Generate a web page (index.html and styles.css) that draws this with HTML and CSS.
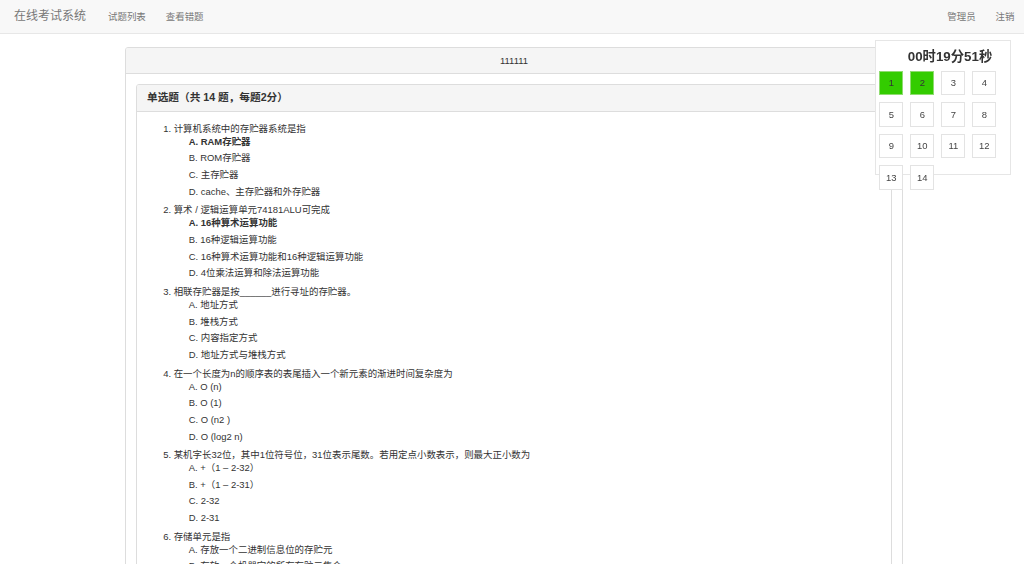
FILE: index.html
```html
<!DOCTYPE html>
<html lang="zh-CN">
<head>
<meta charset="utf-8">
<title>在线考试系统</title>
<link rel="stylesheet" href="styles.css">
</head>
<body>
<nav class="navbar">
  <a class="brand">在线考试系统</a>
  <ul class="nav">
    <li><a>试题列表</a></li>
    <li><a>查看错题</a></li>
  </ul>
  <ul class="nav nav-right">
    <li><a>管理员</a></li>
    <li><a>注销</a></li>
  </ul>
</nav>

<main class="main">
  <section class="panel">
    <div class="panel-heading center">111111</div>
    <div class="panel-body">
      <section class="panel">
        <div class="panel-heading section-title">单选题（共 14 题，每题2分）</div>
        <div class="panel-body">
          <ol class="questions">
            <li>
              <div class="q">计算机系统中的存贮器系统是指</div>
              <div class="opts">
                <div class="opt chosen">A. RAM存贮器</div>
                <div class="opt">B. ROM存贮器</div>
                <div class="opt">C. 主存贮器</div>
                <div class="opt">D. cache、主存贮器和外存贮器</div>
              </div>
            </li>
            <li>
              <div class="q">算术 / 逻辑运算单元74181ALU可完成</div>
              <div class="opts">
                <div class="opt chosen">A. 16种算术运算功能</div>
                <div class="opt">B. 16种逻辑运算功能</div>
                <div class="opt">C. 16种算术运算功能和16种逻辑运算功能</div>
                <div class="opt">D. 4位乘法运算和除法运算功能</div>
              </div>
            </li>
            <li>
              <div class="q">相联存贮器是按______进行寻址的存贮器。</div>
              <div class="opts">
                <div class="opt">A. 地址方式</div>
                <div class="opt">B. 堆栈方式</div>
                <div class="opt">C. 内容指定方式</div>
                <div class="opt">D. 地址方式与堆栈方式</div>
              </div>
            </li>
            <li>
              <div class="q">在一个长度为n的顺序表的表尾插入一个新元素的渐进时间复杂度为</div>
              <div class="opts">
                <div class="opt">A. O (n)</div>
                <div class="opt">B. O (1)</div>
                <div class="opt">C. O (n2 )</div>
                <div class="opt">D. O (log2 n)</div>
              </div>
            </li>
            <li>
              <div class="q">某机字长32位，其中1位符号位，31位表示尾数。若用定点小数表示，则最大正小数为</div>
              <div class="opts">
                <div class="opt">A. +（1 – 2-32）</div>
                <div class="opt">B. +（1 – 2-31）</div>
                <div class="opt">C. 2-32</div>
                <div class="opt">D. 2-31</div>
              </div>
            </li>
            <li>
              <div class="q">存储单元是指</div>
              <div class="opts">
                <div class="opt">A. 存放一个二进制信息位的存贮元</div>
                <div class="opt">B. 存放一个机器字的所有存贮元集合</div>
                <div class="opt">C. 存放一个字节的所有存贮元集合</div>
                <div class="opt">D. 存放两个字节的所有存贮元集合</div>
              </div>
            </li>
          </ol>
        </div>
      </section>
    </div>
  </section>
</main>

<aside class="timer">
  <div class="timer-title">00时19分51秒</div>
  <div class="grid">
    <span class="cell done">1</span>
    <span class="cell done">2</span>
    <span class="cell">3</span>
    <span class="cell">4</span>
    <span class="cell">5</span>
    <span class="cell">6</span>
    <span class="cell">7</span>
    <span class="cell">8</span>
    <span class="cell">9</span>
    <span class="cell">10</span>
    <span class="cell">11</span>
    <span class="cell">12</span>
    <span class="cell">13</span>
    <span class="cell">14</span>
  </div>
</aside>
</body>
</html>
```

FILE: styles.css
```css
html, body {
  margin: 0;
  padding: 0;
  background: #fff;
}
body {
  font-family: "Liberation Sans", "Noto Sans CJK SC", sans-serif;
  font-size: 9.45px;
  line-height: 13.33px;
  color: #333;
  height: 564px;
  overflow: hidden;
}
a { color: inherit; text-decoration: none; }
ul { list-style: none; margin: 0; padding: 0; }

.navbar {
  display: flex;
  align-items: center;
  height: 33px;
  background: #f8f8f8;
  border-bottom: 1px solid #e7e7e7;
  color: #777;
}
.brand {
  font-size: 12px;
  padding: 0 12px 0 14px;
  line-height: 33px;
}
.nav {
  display: flex;
}
.nav li a {
  display: block;
  padding: 0 10px;
  line-height: 33px;
}
.nav-right {
  margin-left: auto;
  margin-right: -0.5px;
}

.main {
  margin-left: 125px;
  width: 778px;
  padding-top: 13px;
}
.panel {
  border: 1px solid #dddddd;
  border-radius: 3px;
  background: #fff;
}
.panel-heading {
  background: #f5f5f5;
  border-bottom: 1px solid #dddddd;
  padding: 6px 10px;
  line-height: 13.33px;
  border-radius: 2px 2px 0 0;
}
.center { text-align: center; }
.panel-body {
  padding: 10px;
}
.section-title {
  font-size: 10.67px;
  font-weight: bold;
}

.questions {
  margin: 0;
  padding: 0 0 0 26.67px;
}
.q {
  line-height: 11px;
}
.opts {
  margin-bottom: 3px;
}
.opt {
  height: 16.67px;
  line-height: 16.67px;
  padding-left: 15px;
}
.opt.chosen {
  font-weight: bold;
}

.timer {
  position: fixed;
  top: 40px;
  left: 875px;
  width: 134px;
  height: 133px;
  border: 1px solid #e6e6e6;
  background: #fff;
}
.timer-title {
  padding: 1.7px 0 0 14px;
  height: 28px;
  line-height: 28px;
  text-align: center;
  font-size: 13.33px;
  font-weight: bold;
  color: #333;
}
.grid {
  display: grid;
  grid-template-columns: repeat(4, 24px);
  grid-auto-rows: 24.5px;
  column-gap: 7px;
  row-gap: 7px;
  padding-left: 3.3px;
}
.cell {
  box-sizing: border-box;
  border: 1px solid #e3e3e3;
  background: #fff;
  display: flex;
  align-items: center;
  justify-content: center;
  font-size: 9.45px;
  color: #444;
}
.cell.done {
  background: #33cc00;
  border-color: #8fdc70;
  color: #333;
}
```
